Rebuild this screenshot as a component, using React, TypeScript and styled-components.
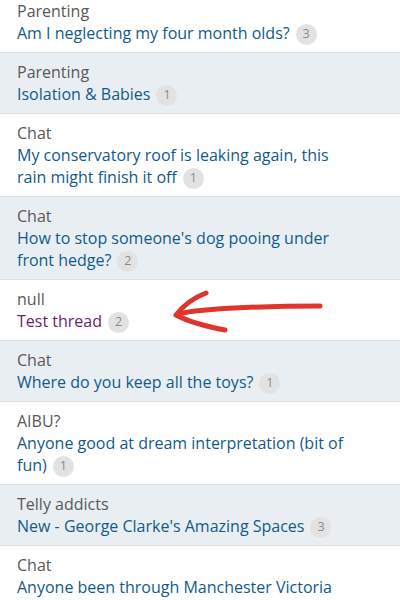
import styled, { createGlobalStyle } from 'styled-components';

const GlobalStyle = createGlobalStyle`
    html, body { margin: 0; padding: 0; background: #fff; }
    body { font-family: "Open Sans", "Noto Sans", sans-serif; overflow: hidden; }
`;

type Thread = { topic: string, title: string, replies: number, visited?: boolean, marked?: boolean };

const threads: Thread[] = [
    { topic: 'Parenting', title: 'Am I neglecting my four month olds?', replies: 3 },
    { topic: 'Parenting', title: 'Isolation & Babies', replies: 1 },
    { topic: 'Chat', title: 'My conservatory roof is leaking again, this rain might finish it off', replies: 1 },
    { topic: 'Chat', title: "How to stop someone's dog pooing under front hedge?", replies: 2 },
    { topic: 'null', title: 'Test thread', replies: 2, visited: true, marked: true },
    { topic: 'Chat', title: 'Where do you keep all the toys?', replies: 1 },
    { topic: 'AIBU?', title: 'Anyone good at dream interpretation (bit of fun)', replies: 1 },
    { topic: 'Telly addicts', title: "New - George Clarke's Amazing Spaces", replies: 3 },
    { topic: 'Chat', title: 'Anyone been through Manchester Victoria station lately?', replies: 4 },
];

const List = styled.ul`
    list-style: none;
    margin: -8px 0 0;
    padding: 0;
`;

const Row = styled.li<{ $shaded: boolean }>`
    position: relative;
    padding: 8px 45px 8px 17px;
    background: ${p => p.$shaded ? '#e9eef2' : '#fff'};
    border-bottom: 1px solid #dbe1e6;
    font-size: 16px;
    line-height: 22px;
`;

const Topic = styled.div`
    color: #585858;
`;

const Title = styled.a<{ $visited?: boolean }>`
    color: ${p => p.$visited ? '#6a1f66' : '#125a8b'};
    text-decoration: none;
`;

const Badge = styled.span`
    display: inline-flex;
    align-items: center;
    justify-content: center;
    width: 21px;
    height: 21px;
    margin: -4px 0 -4px 6px;
    border-radius: 50%;
    background: #e2e2e2;
    color: #8a8a8a;
    font-size: 12.5px;
    line-height: 1;
    vertical-align: middle;
`;

const Arrow = styled.svg`
    position: absolute;
    left: 165px;
    top: 6px;
    width: 165px;
    height: 50px;
    pointer-events: none;
`;

function RedArrow() {
    return (
        <Arrow viewBox="0 0 165 50">
            <path
                d="M155 20 C120 20 70 21 30 25 C22 26 16 27 11 29 M11 29 C17 21 28 12 41 7 M11 29 C24 36 44 41 60 44"
                fill="none"
                stroke="#e0352e"
                strokeWidth="5"
                strokeLinecap="round"
                strokeLinejoin="round"
            />
        </Arrow>
    );
}

export default function App() {
    return (<>
        <GlobalStyle />
        <List>
            {threads.map((it, index) => (
                <Row key={index} $shaded={index % 2 === 1}>
                    <Topic>{it.topic}</Topic>
                    <Title href="#" $visited={it.visited}>{it.title}</Title>
                    <Badge>{it.replies}</Badge>
                    {it.marked && <RedArrow />}
                </Row>
            ))}
        </List>
    </>);
}
